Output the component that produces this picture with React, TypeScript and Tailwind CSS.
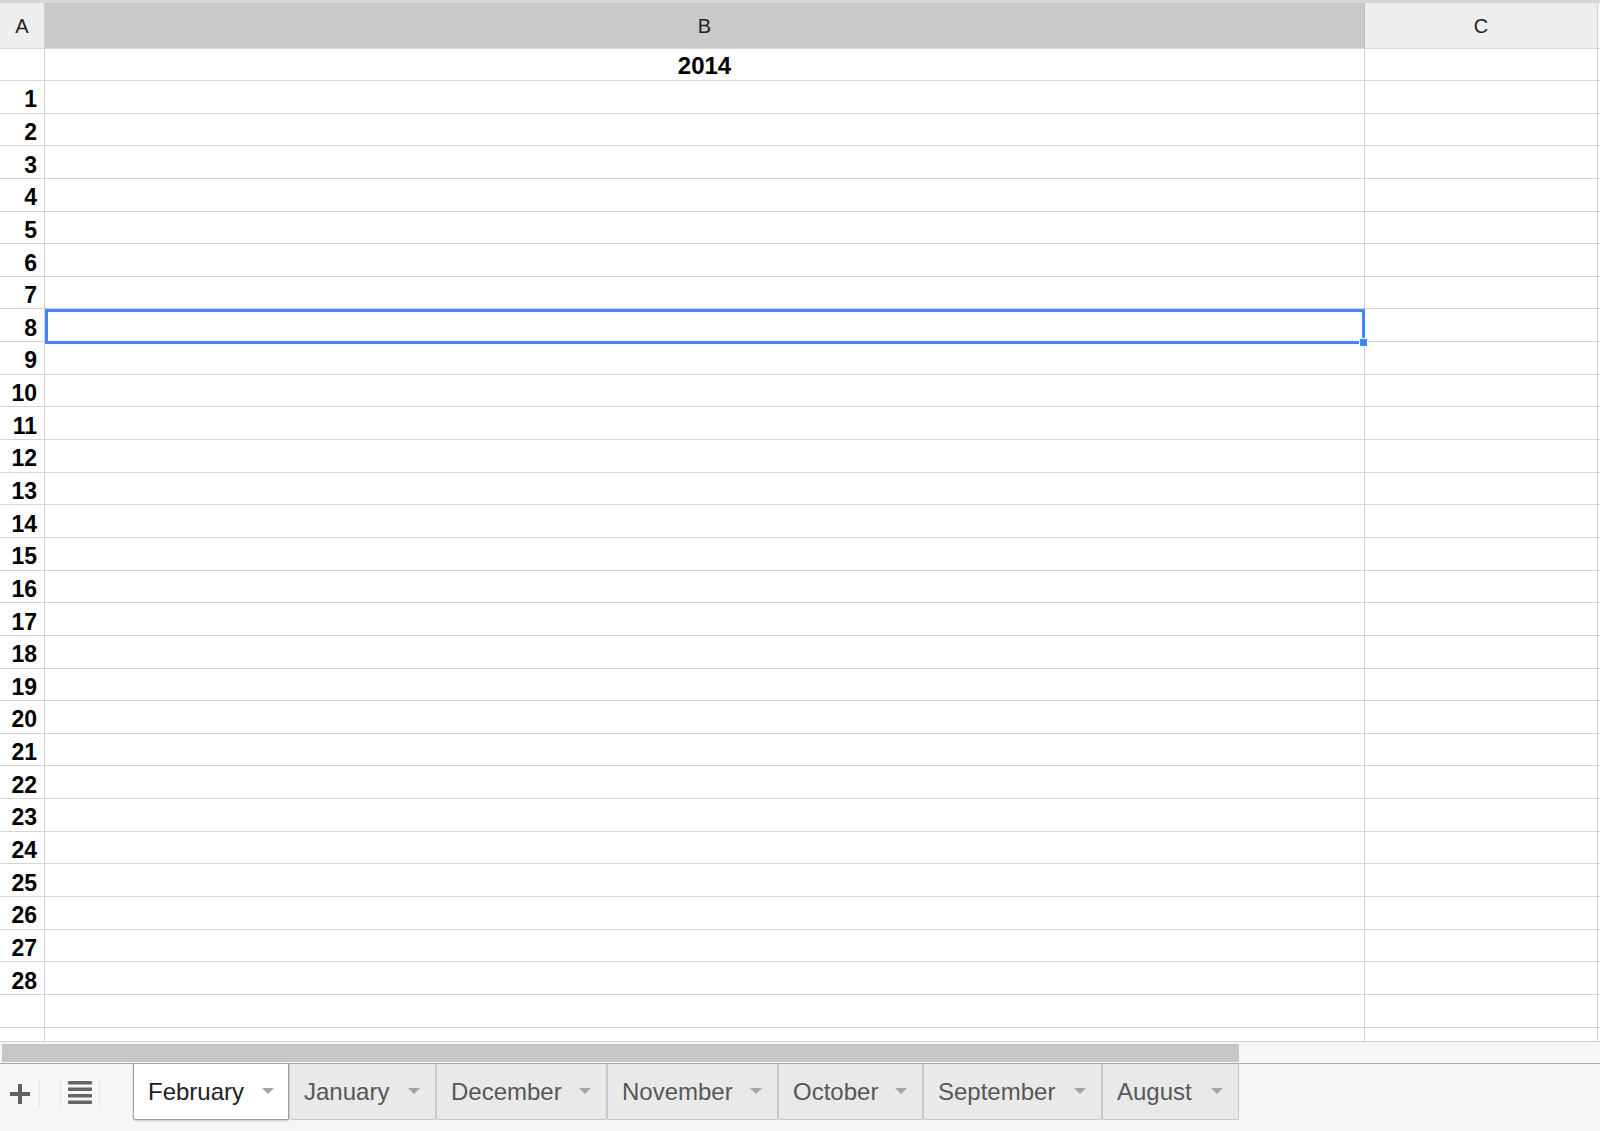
import React from 'react';

// sheet tabs with their widths (px)
const tabs = [
    { name: 'February', w: 'w-[156px]' },
    { name: 'January', w: 'w-[147px]' },
    { name: 'December', w: 'w-[171px]' },
    { name: 'November', w: 'w-[171px]' },
    { name: 'October', w: 'w-[145px]' },
    { name: 'September', w: 'w-[179px]' },
    { name: 'August', w: 'w-[137px]' },
];
const rowNumbers = Array.from({ length: 28 }, (_, i) => i + 1);

function Caret() {
    return (
        <svg width="12" height="6" viewBox="0 0 12 6" className="shrink-0">
            <polygon points="0,0 12,0 6,6" fill="#a3a3a3" />
        </svg>
    );
}

function Row({ num, height, selected, children }: { num?: number; height: string; selected?: boolean; children?: React.ReactNode }) {
    return (
        <div className={`flex border-b border-[#d4d4d4] ${height}`}>
            <div className="w-[45px] shrink-0 border-r border-[#d0d0d0] flex items-center justify-end pr-[7px] pt-[6px] text-[23px] font-bold leading-none text-black">
                {num}
            </div>
            <div className="w-[1320px] shrink-0 border-r border-[#d0d0d0] relative">
                {children}
                {selected && (
                    <div className="absolute left-0 right-[-1px] top-0 bottom-[-3px] border-[3px] border-[#4285f4] z-10">
                        <div className="absolute right-[-6px] bottom-[-6px] w-[9px] h-[9px] bg-[#4285f4] border border-white" />
                    </div>
                )}
            </div>
            <div className="w-[233px] shrink-0 border-r border-[#d0d0d0]" />
        </div>
    );
}

export default function App() {
    return (
        <div className="w-[1600px] h-[1131px] flex flex-col bg-[#f6f6f6] overflow-hidden font-['Liberation_Sans',Arial,sans-serif]">
            {/* column headers */}
            <div className="flex h-[49px] border-t-[3px] border-b border-[#d6d6d6] text-[20px] text-[#222]">
                <div className="w-[45px] shrink-0 bg-[#eeeeee] border-r border-[#d0d0d0] flex items-center justify-center">A</div>
                <div className="w-[1320px] shrink-0 bg-[#c9c9c9] border-r border-[#bdbdbd] flex items-center justify-center">B</div>
                <div className="w-[233px] shrink-0 bg-[#eeeeee] border-r border-[#d0d0d0] flex items-center justify-center">C</div>
            </div>

            {/* cells */}
            <div className="bg-white">
                <Row height="h-[32px]">
                    <div className="h-full flex items-center justify-center pt-[3px] text-[24px] font-bold leading-none text-black">2014</div>
                </Row>
                {rowNumbers.map((n) => (
                    <Row key={n} num={n} height="h-[32.65px]" selected={n === 8} />
                ))}
                <Row height="h-[33px]" />
                <Row height="h-[14px]" />
            </div>

            {/* horizontal scrollbar */}
            <div className="h-[22px] shrink-0 border-b border-[#a8a8a8] bg-[#f6f6f6] pt-[2px] pl-[2px]">
                <div className="w-[1237px] h-[18px] bg-[#c6c6c6]" />
            </div>

            {/* sheet tabs */}
            <div className="flex-1 flex items-start">
                <div className="w-[133px] shrink-0 h-[56px] flex items-center">
                    <button className="w-[40px] h-[28px] border-r border-[#e2e6ef] flex items-center justify-center mt-[4px]">
                        <svg width="20" height="20" viewBox="0 0 20 20">
                            <rect x="0" y="8" width="20" height="4" fill="#616161" />
                            <rect x="8" y="0" width="4" height="20" fill="#616161" />
                        </svg>
                    </button>
                    <button className="ml-[20px] w-[40px] h-[28px] border-x border-[#e2e6ef] flex items-center justify-center mt-[2px]">
                        <svg width="24" height="23" viewBox="0 0 24 23">
                            <rect x="0" y="0" width="24" height="3.4" rx="0.8" fill="#666" />
                            <rect x="0" y="6.5" width="24" height="3.4" rx="0.8" fill="#666" />
                            <rect x="0" y="13" width="24" height="3.4" rx="0.8" fill="#666" />
                            <rect x="0" y="19.5" width="24" height="3.4" rx="0.8" fill="#666" />
                        </svg>
                    </button>
                </div>
                {tabs.map((t, i) => (
                    <div
                        key={t.name}
                        className={
                            i === 0
                                ? `h-[56px] ${t.w} shrink-0 flex items-center pl-[14px] pr-[14px] bg-white border-x border-b border-[#9e9e9e] rounded-b-[2px] shadow-[0_1px_2px_rgba(0,0,0,0.2)] text-[24px] text-[#222]`
                                : `h-[56px] ${t.w} shrink-0 flex items-center pl-[14px] pr-[15px] bg-[#e9e9e9] border-x border-b border-[#c8c8c8] rounded-b-[2px] text-[24px] text-[#575757]`
                        }
                    >
                        <span className="leading-none pt-[2px] whitespace-nowrap">{t.name}</span>
                        <span className="ml-auto">
                            <Caret />
                        </span>
                    </div>
                ))}
            </div>
        </div>
    );
}
